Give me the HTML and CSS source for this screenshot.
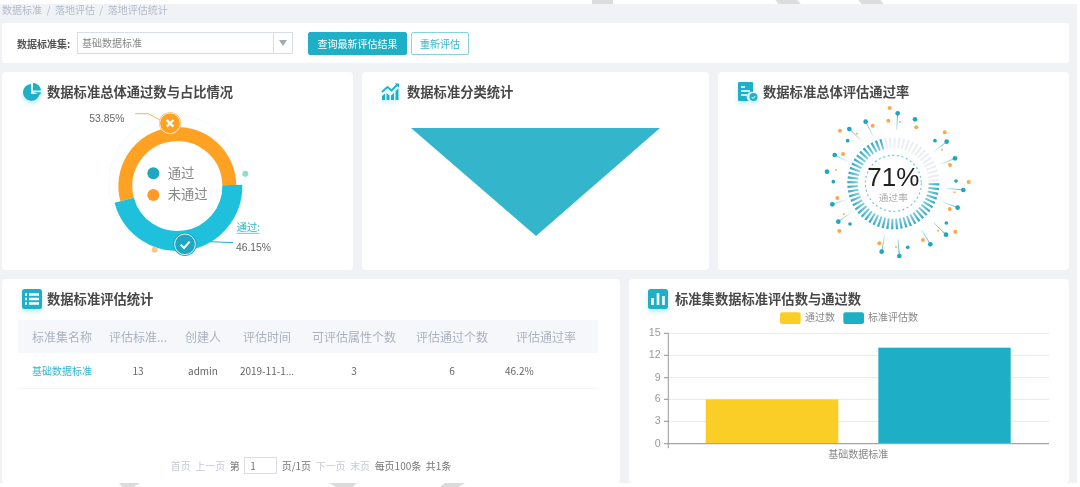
FILE: index.html
```html
<!DOCTYPE html>
<html lang="zh-CN">
<head>
<meta charset="utf-8">
<title>落地评估统计</title>
<link rel="stylesheet" href="styles.css">
</head>
<body>
<div class="page">
  <div class="frame">
    <div class="crumbs">数据标准 &nbsp;/&nbsp; 落地评估 &nbsp;/&nbsp; 落地评估统计</div>
    <div class="filter">
      <span class="filter-label">数据标准集:</span>
      <div class="select"><span class="select-text">基础数据标准</span><span class="select-arrow"><i class="caret"></i></span></div>
      <button class="btn btn-primary">查询最新评估结果</button>
      <button class="btn btn-ghost">重新评估</button>
    </div>

    <div class="row row-top">
      <section class="card">
        <h2 class="head head-a">
          <svg class="icon" viewBox="0 0 20 20"><path d="M9 2a8.400 8.400 0 1 0 8.600 10H9z" fill="#1fb0c8"/><path d="M11 1a8 8 0 0 1 8 7.500h-8z" fill="#1fb0c8"/><path d="M11.500 10.200H19l-.7 2.800z" fill="#1fb0c8"/></svg>
          <span>数据标准总体通过数与占比情况</span>
        </h2>
        <svg class="pie" viewBox="0 6 720 504">
          <circle cx="350" cy="250" r="203" fill="none" stroke="#cdeef4" stroke-width="2.500" stroke-dasharray="3 5"/>
          <path d="M201.300 298.400A156 156 0 1 1 508 255.300" fill="none" stroke="#ffa224" stroke-width="42"/>
          <path d="M517 255A165 165 0 0 1 192.600 300.700" fill="none" stroke="#1fc0dc" stroke-width="60"/>
          <circle cx="556" cy="221" r="9" fill="#8fe0c0"/>
          <circle cx="284" cy="449" r="9" fill="#ffc48a"/>
          <path d="M225 41H265L300 60" fill="none" stroke="#ffb64d" stroke-width="3"/>
          <path d="M450 425L520 428" fill="none" stroke="#1fb0c8" stroke-width="3"/>
          <circle cx="330" cy="70" r="33" fill="#ffa224"/>
          <circle cx="330" cy="70" r="31" fill="none" stroke="#fff" stroke-width="3" stroke-opacity=".8"/>
          <path d="M320 60L340 80M340 60L320 80" stroke="#fff" stroke-width="7"/>
          <circle cx="375" cy="433" r="35" fill="#1fa6c0"/>
          <circle cx="375" cy="433" r="31" fill="none" stroke="#fff" stroke-width="3" stroke-opacity=".85"/>
          <path d="M362 434L372 444L389 425" fill="none" stroke="#fff" stroke-width="6"/>
          <circle cx="280" cy="220" r="18" fill="#1fa6c0"/>
          <circle cx="280" cy="285" r="18" fill="#ff9a26"/>
          <text class="pie-legend" x="323" y="233">通过</text>
          <text class="pie-legend" x="323" y="298">未通过</text>
          <text class="pie-num" x="88" y="66">53.85%</text>
          <text class="pie-pass" x="530" y="393">通过:</text>
          <path d="M530 400H598" stroke="#1fb0c8" stroke-width="2"/>
          <text class="pie-num" x="528" y="452">46.15%</text>
        </svg>
      </section>

      <section class="card">
        <h2 class="head head-b">
          <svg class="icon" viewBox="0 0 20 20"><path d="M1 10L6.500 5l4 3.500L16.500 2.500" fill="none" stroke="#1fb0c8" stroke-width="1.800"/><path d="M13.800 1.500H18v4.200z" fill="#1fb0c8"/><path d="M1 18v-4l3-2.500V18zM5.500 18v-7l3 2.500V18zM10 18v-4.500l3-2.500v7zM14.500 18V9l3-2.500V18z" fill="#1fb0c8"/></svg>
          <span>数据标准分类统计</span>
        </h2>
        <svg class="funnel" viewBox="0 0 249 108"><path d="M0 0H249L125 108z" fill="#33b6cc"/></svg>
      </section>

      <section class="card">
        <h2 class="head head-a">
          <svg class="icon" viewBox="0 0 20 20"><path d="M1 0H14a1 1 0 0 1 1 1v9a5 5 0 0 0-4 9H1a1 1 0 0 1-1-1V1a1 1 0 0 1 1-1z" fill="#1fb0c8"/><path d="M3 5H7M3 9H12M3 13H9" stroke="#fff" stroke-width="1.600"/><circle cx="15.500" cy="15" r="4" fill="#1fb0c8"/><path d="M13.600 15l1.500 1.500 2.300-2.600" fill="none" stroke="#fff" stroke-width="1"/></svg>
          <span>数据标准总体评估通过率</span>
        </h2>
        <svg class="gauge" viewBox="0 81 780 489">
          <defs>
            <radialGradient id="tick" gradientUnits="userSpaceOnUse" cx="490" cy="325" r="140">
              <stop offset="0.72" stop-color="#8fd6e4"/>
              <stop offset="1" stop-color="#2ba8c5"/>
            </radialGradient>
            <radialGradient id="tail" gradientUnits="userSpaceOnUse" cx="490" cy="325" r="230">
              <stop offset="0.62" stop-color="#fff"/>
              <stop offset="0.950" stop-color="#2aaac6"/>
            </radialGradient>
          </defs>
          <circle cx="490" cy="325" r="122" fill="none" stroke="#eceef5" stroke-width="32" stroke-dasharray="6 6.770"/>
          <path d="M612 325A122 122 0 1 1 458.400 207.200" fill="none" stroke="url(#tick)" stroke-width="32" stroke-dasharray="6 6.770"/>
          <circle cx="490" cy="325" r="84" fill="none" stroke="#6cc6d8" stroke-width="3.500" stroke-dasharray="6 8"/>
          <path class="tails" stroke="url(#tail)" d="M503 115L500 165M407 140L430 185M358 162L392 195M314 240L359 262M307 388L354 372M325 440L366 411M455 530L464 481M508 543L504 493M601 508L575 465M648 479L612 444M683 398L636 380M700 345L650 340M675 250L629 269M650 200L610 231"/>
          <g class="dots-teal">
            <circle cx="503" cy="115" r="7"/><circle cx="407" cy="140" r="7"/><circle cx="358" cy="162" r="7"/><circle cx="314" cy="240" r="7"/><circle cx="307" cy="388" r="7"/><circle cx="325" cy="440" r="7"/><circle cx="455" cy="530" r="7"/><circle cx="508" cy="543" r="7"/><circle cx="601" cy="508" r="7"/><circle cx="648" cy="479" r="7"/><circle cx="683" cy="398" r="7"/><circle cx="700" cy="345" r="7"/><circle cx="675" cy="250" r="7"/><circle cx="650" cy="200" r="7"/>
            <circle cx="555" cy="133" r="7"/><circle cx="353" cy="197" r="5.500"/><circle cx="291" cy="290" r="7"/><circle cx="310" cy="320" r="5.500"/><circle cx="360" cy="447" r="5.500"/><circle cx="533" cy="517" r="5.500"/><circle cx="649" cy="444" r="5.500"/><circle cx="678" cy="318" r="5.500"/><circle cx="615" cy="197" r="5.500"/>
          </g>
          <g class="dots-orange">
            <circle cx="479" cy="99" r="6"/><circle cx="475" cy="137" r="6"/><circle cx="559" cy="157" r="6"/><circle cx="428" cy="152" r="6"/><circle cx="330" cy="167" r="6"/><circle cx="339" cy="237" r="6"/><circle cx="644" cy="172" r="6"/><circle cx="660" cy="270" r="6"/><circle cx="716" cy="321" r="6"/><circle cx="659" cy="402" r="6"/><circle cx="676" cy="470" r="6"/><circle cx="579" cy="495" r="6"/><circle cx="448" cy="505" r="6"/><circle cx="328" cy="468" r="6"/><circle cx="322" cy="369" r="6"/>
            <circle cx="510" cy="141" r="3"/><circle cx="380" cy="176" r="3"/><circle cx="636" cy="224" r="3"/><circle cx="318" cy="285" r="3"/><circle cx="674" cy="352" r="3"/><circle cx="341" cy="418" r="3"/><circle cx="624" cy="467" r="3"/><circle cx="498" cy="516" r="3"/>
          </g>
          <text class="gauge-num" x="490" y="333">71%</text>
          <text class="gauge-sub" x="490" y="377">通过率</text>
        </svg>
      </section>
    </div>

    <div class="row row-bottom">
      <section class="card card-table">
        <h2 class="head head-a">
          <svg class="icon" viewBox="0 0 20 20"><rect width="20" height="20" rx="2.500" fill="#1fb0c8"/><path d="M3 5.500h2M3 10h2M3 14.500h2M7 5.500h10M7 10h10M7 14.500h10" stroke="#fff" stroke-width="2.400"/></svg>
          <span>数据标准评估统计</span>
        </h2>
        <table class="grid">
          <colgroup><col class="c1"><col class="c2"><col class="c3"><col class="c4"><col class="c5"><col class="c6"><col class="c7"></colgroup>
          <thead>
            <tr><th>标准集名称</th><th>评估标准...</th><th>创建人</th><th>评估时间</th><th>可评估属性个数</th><th>评估通过个数</th><th>评估通过率</th></tr>
          </thead>
          <tbody>
            <tr><td class="link">基础数据标准</td><td>13</td><td>admin</td><td>2019-11-1...</td><td>3</td><td>6</td><td class="rate">46.2%</td></tr>
          </tbody>
        </table>
        <div class="pager">
          <span class="off">首页</span><span class="off">上一页</span><span>第</span><span class="pager-input">1</span><span>页/1页</span><span class="off">下一页</span><span class="off">末页</span><span>每页100条</span><span>共1条</span>
        </div>
      </section>

      <section class="card">
        <h2 class="head head-c">
          <svg class="icon" viewBox="0 0 20 20"><rect width="20" height="20" rx="2.500" fill="#1fb0c8"/><path d="M4.500 16V9M10 16V4M15.500 16V7" stroke="#fff" stroke-width="2.600"/></svg>
          <span>标准集数据标准评估数与通过数</span>
        </h2>
        <svg class="bars" viewBox="27 102 1320 522">
          <rect x="480" y="112" width="62" height="35" rx="6" fill="#fbce27"/>
          <text class="bar-legend" x="555" y="138">通过数</text>
          <rect x="670" y="112" width="62" height="35" rx="6" fill="#1eaec5"/>
          <text class="bar-legend" x="744" y="138">标准评估数</text>
          <path class="gridline" d="M145 175H1287M145 241H1287M145 308H1287M145 373H1287M145 439H1287"/>
          <rect x="257" y="373" width="398" height="133" fill="#fbce27"/>
          <rect x="775" y="218" width="397" height="288" fill="#1eaec5"/>
          <path class="axis" d="M145 175V520M132 175H145M132 241H145M132 308H145M132 373H145M132 439H145M132 506H1287"/>
          <text class="bar-y" x="122" y="184">15</text>
          <text class="bar-y" x="122" y="250">12</text>
          <text class="bar-y" x="122" y="317">9</text>
          <text class="bar-y" x="122" y="382">6</text>
          <text class="bar-y" x="122" y="448">3</text>
          <text class="bar-y" x="122" y="515">0</text>
          <text class="bar-x" x="715" y="550">基础数据标准</text>
        </svg>
      </section>
    </div>
  </div>
  <i class="mark mark-t1"></i><i class="mark mark-t2"></i><i class="mark mark-t3"></i>
  <i class="mark mark-b1"></i><i class="mark mark-b2"></i><i class="mark mark-b3"></i>
</div>
</body>
</html>
```

FILE: styles.css
```css
* { box-sizing: border-box; }
html, body { margin: 0; height: 100%; background: #fff; overflow: hidden; }
body { font-family: "Noto Sans CJK SC", "Liberation Sans", sans-serif; color: #666; }
.page { position: relative; width: 1080px; height: 487px; padding-top: 4px; overflow: hidden; filter: blur(0.5px); }
.frame { width: 1077px; height: 479px; padding: 0 8px 0 2px; background: #f0f2f6; }
.crumbs { height: 19px; font-size: 10px; line-height: 11px; color: #b3bbca; white-space: nowrap; }
.filter { height: 40px; margin-bottom: 9px; padding-left: 15px; display: flex; align-items: center; background: #fff; border-radius: 3px; }
.filter-label { width: 60px; font-size: 10px; font-weight: 700; color: #555; }
.select { width: 216px; height: 22px; display: flex; border: 1px solid #d9dde6; background: #fff; }
.select-text { flex: 1; padding-left: 4px; font-size: 10px; line-height: 20px; color: #888; }
.select-arrow { width: 19px; display: flex; align-items: center; justify-content: center; border-left: 1px solid #d9dde6; }
.caret { border-left: 4px solid transparent; border-right: 4px solid transparent; border-top: 6px solid #a3a9b5; }
.btn { height: 23px; padding: 0; font: 10px "Noto Sans CJK SC", sans-serif; border-radius: 2px; cursor: pointer; }
.btn-primary { width: 99px; margin-left: 15px; color: #fff; background: #1fb0c8; border: 1px solid #1fb0c8; }
.btn-ghost { width: 58px; margin-left: 4px; color: #34b5cb; background: #fff; border: 1px solid #86d3e0; }
.row { display: grid; column-gap: 9px; }
.row-top { height: 198px; margin-bottom: 9px; grid-template-columns: 351px 347px 351px; }
.row-bottom { height: 204px; grid-template-columns: 618px 440px; }
.card { background: #fff; border-radius: 4px; overflow: hidden; }
.head { height: 20px; margin: 10px 0 0; display: flex; align-items: center; gap: 5px; font-size: 13.300px; font-weight: 700; line-height: 20px; color: #484848; white-space: nowrap; }
.head-a { padding-left: 20px; }
.head-b { padding-left: 19px; gap: 6px; }
.head-c { padding-left: 19px; gap: 7px; }
.icon { width: 20px; height: 20px; flex: none; filter: drop-shadow(0 3px 2px rgba(60, 200, 230, .3)); }
.pie, .funnel, .gauge, .bars { display: block; }
.pie { width: 240px; height: 168px; margin-left: 58px; }
.pie-legend { font-size: 40px; fill: #888; }
.pie-num { font-family: "Liberation Sans", sans-serif; font-size: 31px; fill: #666; }
.pie-pass { font-size: 31px; fill: #2fb3cb; }
.funnel { width: 249px; height: 108px; margin: 26px 0 0 49px; }
.gauge { width: 260px; height: 163px; margin-left: 12px; }
.tails { fill: none; stroke-width: 3; }
.dots-teal { fill: #1fa6c0; }
.dots-orange { fill: #ffa64d; }
.gauge-num { font-family: "Liberation Sans", sans-serif; font-size: 78px; fill: #222; text-anchor: middle; }
.gauge-sub { font-family: "Liberation Sans", "Noto Sans CJK SC", sans-serif; font-size: 29px; fill: #aaa; text-anchor: middle; }
.card-table { display: flex; flex-direction: column; }
.grid { width: 580px; margin: 11px 0 0 16px; border-collapse: collapse; table-layout: fixed; }
.c1 { width: 88px; } .c2 { width: 64px; } .c3 { width: 66px; } .c4 { width: 62px; }
.c5 { width: 112px; } .c6 { width: 84px; } .c7 { width: 104px; }
.grid th { height: 33px; padding: 0; font-size: 12px; font-weight: 400; color: #aab2c0; background: #f6f7fb; white-space: nowrap; }
.grid td { height: 35px; padding: 0; font-size: 10px; text-align: center; color: #666; border-bottom: 1px solid #f3f4f6; white-space: nowrap; }
.grid td.link { color: #34b5cb; }
.grid td.rate { padding-left: 11px; text-align: left; }
.pager { margin-top: auto; padding-bottom: 9px; display: flex; justify-content: center; align-items: center; gap: 4.500px; font-size: 10px; color: #777; }
.pager .off { color: #c6ccd6; }
.pager-input { width: 33px; height: 17px; padding-left: 5px; line-height: 15px; border: 1px solid #d7dee6; }
.bars { width: 440px; height: 174px; }
.bar-legend { font-size: 30px; fill: #888; }
.gridline { fill: none; stroke: #e8e8ea; stroke-width: 3; }
.axis { fill: none; stroke: #a5a5a5; stroke-width: 3.500; }
.bar-y { font-family: "Liberation Sans", sans-serif; font-size: 32px; fill: #999; text-anchor: end; }
.bar-x { font-size: 30px; fill: #888; text-anchor: middle; }
.mark { position: absolute; height: 4px; background: #dcdcdc; }
.mark-t1 { top: 0; left: 592px; width: 21px; }
.mark-t2 { top: 0; left: 777px; width: 22px; transform: skewX(40deg); }
.mark-t3 { top: 0; left: 860px; width: 22px; transform: skewX(40deg); }
.mark-b1 { bottom: 0; left: 119px; width: 21px; clip-path: polygon(0 0, 100% 0, 70% 100%, 15% 100%); }
.mark-b2 { bottom: 0; left: 329px; width: 28px; clip-path: polygon(0 0, 100% 0, 85% 100%, 25% 100%); }
.mark-b3 { bottom: 0; left: 440px; width: 25px; clip-path: polygon(20% 0, 100% 0, 75% 100%, 0 100%); }
```
